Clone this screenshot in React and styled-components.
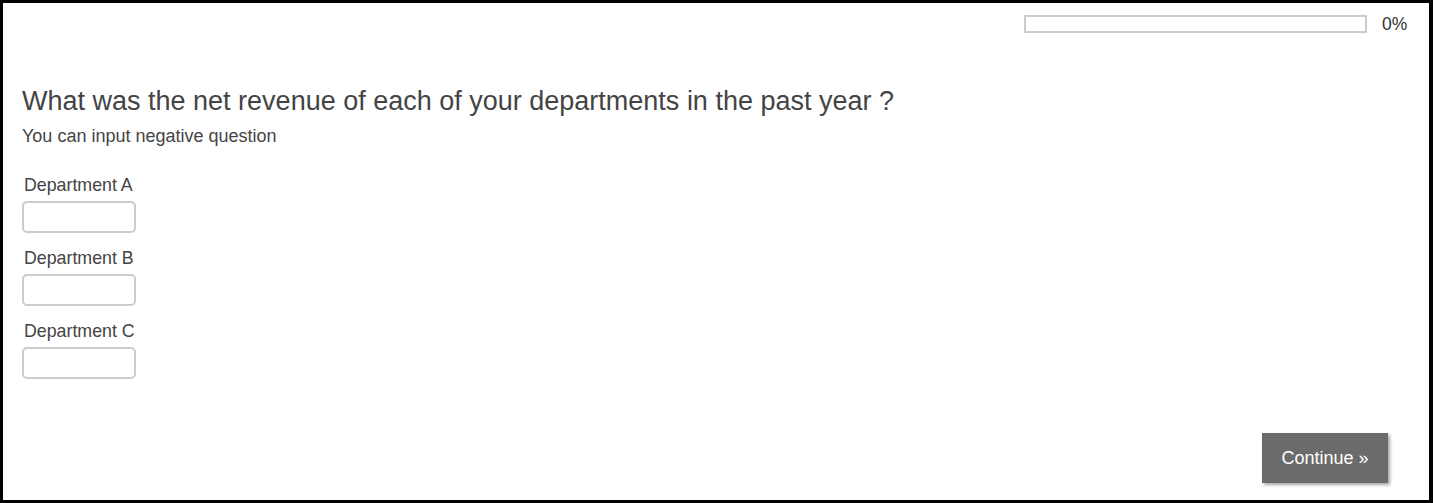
import React from 'react'
import styled, { createGlobalStyle } from 'styled-components'

const GlobalStyle = createGlobalStyle`
  html, body {
    margin: 0;
    padding: 0;
    background: #fff;
  }
  body {
    font-family: "Liberation Sans", Arial, sans-serif;
  }
`

const Frame = styled.div`
  box-sizing: border-box;
  width: 1433px;
  height: 503px;
  border-style: solid;
  border-color: #000;
  border-width: 3px 4px 3px 3px;
  display: flex;
  flex-direction: column;
  padding: 0 21px 0 19px;
`

const ProgressRow = styled.div`
  display: flex;
  justify-content: flex-end;
  align-items: center;
  gap: 15px;
  padding-top: 12px;
  height: 18px;
`

const ProgressTrack = styled.div`
  box-sizing: border-box;
  width: 343px;
  height: 18px;
  border: 2px solid #cccccc;
  background: #fff;
`

const ProgressFill = styled.div`
  height: 100%;
  background: #6b6b6b;
`

const ProgressText = styled.span`
  font-size: 17.5px;
  color: #333;
  width: 26px;
`

const Question = styled.h1`
  margin: 53px 0 0;
  font-size: 27px;
  font-weight: normal;
  line-height: 30px;
  color: #444;
`

const Hint = styled.p`
  margin: 10px 0 0;
  font-size: 18px;
  line-height: 20px;
  color: #444;
`

const Fields = styled.div`
  display: flex;
  flex-direction: column;
  gap: 15px;
  margin-top: 29px;
`

const Field = styled.label`
  display: flex;
  flex-direction: column;
  gap: 6px;
`

const FieldLabel = styled.span`
  font-size: 17.8px;
  line-height: 20px;
  color: #444;
  padding-left: 2px;
`

const TextInput = styled.input`
  box-sizing: border-box;
  width: 114px;
  height: 32px;
  border: 2px solid #cccccc;
  border-radius: 5px;
  font-size: 16px;
  padding: 0 6px;
  outline: none;
`

const Footer = styled.div`
  margin-top: auto;
  display: flex;
  justify-content: flex-end;
  padding: 0 20px 17px 0;
`

const ContinueButton = styled.button`
  width: 126px;
  height: 50px;
  border: none;
  background: #6b6b6b;
  color: #fff;
  font-family: "Liberation Sans", Arial, sans-serif;
  font-size: 18px;
  cursor: pointer;
  box-shadow: 2px 2px 3px rgba(0, 0, 0, 0.35);
`

const departments = ['Department A', 'Department B', 'Department C']

export default function App() {
  const progress = 0

  return (
    <>
      <GlobalStyle />
      <Frame>
        <ProgressRow>
          <ProgressTrack>
            <ProgressFill style={{ width: `${progress}%` }} />
          </ProgressTrack>
          <ProgressText>{progress}%</ProgressText>
        </ProgressRow>

        <Question>What was the net revenue of each of your departments in the past year ?</Question>
        <Hint>You can input negative question</Hint>

        <Fields>
          {departments.map((name) => (
            <Field key={name}>
              <FieldLabel>{name}</FieldLabel>
              <TextInput type="text" />
            </Field>
          ))}
        </Fields>

        <Footer>
          <ContinueButton>Continue »</ContinueButton>
        </Footer>
      </Frame>
    </>
  )
}
